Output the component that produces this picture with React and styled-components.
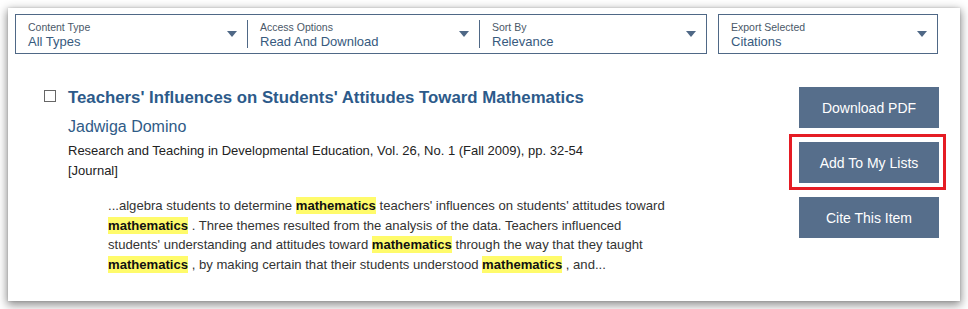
import styled, { createGlobalStyle } from "styled-components";

const GlobalStyle = createGlobalStyle`
  html, body {
    background: #fff;
  }
  body {
    margin: 0;
    padding: 8px;
    font-family: "Liberation Sans", Arial, sans-serif;
  }
`;

const Card = styled.div`
  position: relative;
  width: 952px;
  height: 293px;
  box-sizing: border-box;
  background: #fff;
  box-shadow: 0 0 2px rgba(0, 0, 0, 0.15), 0 3px 9px 1px rgba(0, 0, 0, 0.45);
  padding: 6px 22px 0 7px;
`;

const FilterRow = styled.div`
  display: flex;
  gap: 11px;
`;

const FilterGroup = styled.div`
  display: flex;
  align-items: center;
  width: ${(p) => p.width}px;
  height: 40px;
  box-sizing: border-box;
  border: 1px solid #4f6886;
`;

const Select = styled.div`
  flex: ${(p) => (p.grow ? 1 : "none")};
  width: ${(p) => (p.width ? `${p.width}px` : "auto")};
  height: 28px;
  box-sizing: border-box;
  display: flex;
  align-items: center;
  justify-content: space-between;
  padding: 0 10px 0 12px;
  border-left: ${(p) => (p.divider ? "1px solid #4f6886" : "none")};
`;

const SelectText = styled.div`
  display: flex;
  flex-direction: column;
  padding-top: 2px;
`;

const SelectLabel = styled.span`
  font-size: 10.5px;
  line-height: 12px;
  color: #4a5868;
`;

const SelectValue = styled.span`
  font-size: 13px;
  line-height: 16px;
  margin-top: 1px;
  color: #375a7e;
`;

const Caret = styled.span`
  width: 0;
  height: 0;
  border-left: 5px solid transparent;
  border-right: 5px solid transparent;
  border-top: 6px solid #4f6886;
  margin-top: -1px;
`;

const Result = styled.div`
  display: flex;
  justify-content: space-between;
  margin-top: 33px;
`;

const Main = styled.div`
  display: flex;
  gap: 12px;
  padding: 2px 0 0 29px;
`;

const Check = styled.span`
  width: 12px;
  height: 12px;
  box-sizing: border-box;
  border: 1px solid #666;
  margin-top: 1px;
  flex: none;
`;

const Details = styled.div`
  display: flex;
  flex-direction: column;
`;

const Title = styled.a`
  font-size: 16.8px;
  font-weight: bold;
  line-height: 18px;
  color: #2c5a8a;
  text-decoration: none;
`;

const Author = styled.div`
  font-size: 16px;
  line-height: 20px;
  color: #2f5b87;
  margin: 10px 0 4px;
`;

const Meta = styled.div`
  font-size: 13px;
  line-height: 20px;
  color: #222;
`;

const Snippet = styled.p`
  margin: 15px 0 0 40px;
  font-size: 13.1px;
  line-height: 19.5px;
  color: #333;
`;

const Hit = styled.mark`
  background: #fffb6b;
  color: #111;
  font-weight: bold;
  padding: 1px 0;
`;

const Actions = styled.div`
  display: flex;
  flex-direction: column;
  gap: 14px;
  margin-right: -1px;
`;

const Button = styled.button`
  width: 140px;
  height: 41px;
  border: none;
  background: #566e8b;
  color: #fff;
  font-family: "Liberation Sans", Arial, sans-serif;
  font-size: 14px;
  cursor: pointer;
`;

const Highlighted = styled.div`
  position: relative;
  &::after {
    content: "";
    position: absolute;
    top: -8px;
    bottom: -7px;
    left: -10px;
    right: -7px;
    border: 3px solid #e51c24;
    pointer-events: none;
  }
`;

const filters = [
  { label: "Content Type", value: "All Types", width: 231 },
  { label: "Access Options", value: "Read And Download", width: 232, divider: true },
  { label: "Sort By", value: "Relevance", grow: true, divider: true },
];

export default function App() {
  return (
    <>
      <GlobalStyle />
      <Card>
        <FilterRow>
          <FilterGroup width={692}>
            {filters.map((f) => (
              <Select key={f.label} width={f.width} grow={f.grow} divider={f.divider}>
                <SelectText>
                  <SelectLabel>{f.label}</SelectLabel>
                  <SelectValue>{f.value}</SelectValue>
                </SelectText>
                <Caret />
              </Select>
            ))}
          </FilterGroup>
          <FilterGroup width={220}>
            <Select grow>
              <SelectText>
                <SelectLabel>Export Selected</SelectLabel>
                <SelectValue>Citations</SelectValue>
              </SelectText>
              <Caret />
            </Select>
          </FilterGroup>
        </FilterRow>

        <Result>
          <Main>
            <Check />
            <Details>
              <Title href="#">
                Teachers' Influences on Students' Attitudes Toward Mathematics
              </Title>
              <Author>Jadwiga Domino</Author>
              <Meta>
                Research and Teaching in Developmental Education, Vol. 26, No. 1
                (Fall 2009), pp. 32-54
              </Meta>
              <Meta>[Journal]</Meta>
              <Snippet>
                ...algebra students to determine <Hit>mathematics</Hit> teachers'
                influences on students' attitudes toward
                <br />
                <Hit>mathematics</Hit> . Three themes resulted from the analysis
                of the data. Teachers influenced
                <br />
                students' understanding and attitudes toward{" "}
                <Hit>mathematics</Hit> through the way that they taught
                <br />
                <Hit>mathematics</Hit> , by making certain that their students
                understood <Hit>mathematics</Hit> , and...
              </Snippet>
            </Details>
          </Main>
          <Actions>
            <Button>Download PDF</Button>
            <Highlighted>
              <Button>Add To My Lists</Button>
            </Highlighted>
            <Button>Cite This Item</Button>
          </Actions>
        </Result>
      </Card>
    </>
  );
}
